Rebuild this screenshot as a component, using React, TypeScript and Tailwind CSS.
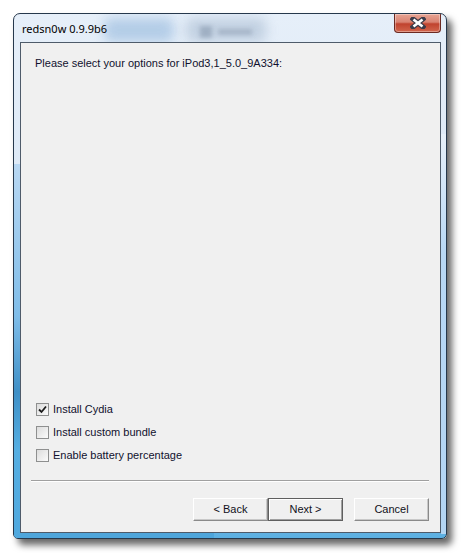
import React from "react";

function CheckBox({ checked }: { checked?: boolean }) {
  return (
    <div className="w-[13px] h-[13px] border border-[#8e8f8f] bg-gradient-to-br from-[#dcdcdc] to-[#fbfbfb] flex items-center justify-center shrink-0">
      {checked && (
        <svg width="9" height="9" viewBox="0 0 9 9">
          <path d="M1 4.5 L3.5 7 L8 1.5" fill="none" stroke="#1c1c1c" strokeWidth="1.8" />
        </svg>
      )}
    </div>
  );
}

function Btn({ label, def, className = "" }: { label: string; def?: boolean; className?: string }) {
  return (
    <div
      className={
        "w-[75px] h-[23px] flex items-center justify-center text-[11px] text-[#101020] bg-[#f0f0f0] " +
        (def
          ? "border border-[#5f5f5f] shadow-[inset_1px_1px_0_#ffffff,inset_-1px_-1px_0_#a0a0a0] "
          : "border-t border-l border-t-[#ffffff] border-l-[#ffffff] border-r border-b border-r-[#8a8a8a] border-b-[#8a8a8a] shadow-[inset_-1px_-1px_0_#c8c8c8] ") +
        className
      }
    >
      {label}
    </div>
  );
}

export default function App() {
  return (
    <div className="w-[461px] h-[553px] bg-white pt-[13px] pl-[13px]" style={{ fontFamily: '"Liberation Sans", Arial, sans-serif' }}>
      <div className="relative w-[434px] h-[526px] rounded-t-[7px] rounded-b-[5px] border border-[#26384c] shadow-[5px_6px_7px_rgba(0,0,0,0.6)] pt-[28px] pl-[6px] pr-[5px] pb-[5px] overflow-hidden bg-[linear-gradient(to_bottom,#e6eff9_0%,#dde9f6_30%,#cfe3f6_60%,#a9d0f0_75%,#5cb0e2_100%)]">
        {/* blurred glass decoration */}
        <div className="absolute left-[90px] top-[4px] w-[70px] h-[24px] rounded-[6px] bg-[#9fbfe0] blur-[6px] opacity-70" />
        <div className="absolute left-[172px] top-[4px] w-[80px] h-[24px] rounded-[6px] bg-[#b3c4d8] blur-[6px] opacity-70" />
        <div className="absolute left-[186px] top-[12px] w-[12px] h-[12px] bg-[#7d8fa5] blur-[2px] opacity-50" />
        <div className="absolute left-[204px] top-[15px] w-[34px] h-[6px] bg-[#8b9bb0] blur-[2px] opacity-50" />
        <div className="absolute left-0 bottom-0 w-[200px] h-[6px] bg-[#4ea6dc]" />
        <div className="absolute left-0 top-[150px] w-[6px] h-[380px] bg-[linear-gradient(to_bottom,#b8d7f2,#7fbde9_40%,#3e8fc6_60%,#55aee2_75%,#4fa8de)]" />
        <div className="absolute right-0 top-[120px] w-[5px] h-[400px] bg-[linear-gradient(to_bottom,#e7f0f9,#b8d8f5_30%,#b3d5f3)]" />

        {/* title */}
        <div className="absolute left-[8px] top-[7px] text-[11px] text-black" style={{ fontFamily: '"Noto Sans", "Open Sans", sans-serif' }}>
          redsn0w 0.9.9b6
        </div>

        {/* close button */}
        <div className="absolute right-[5px] top-0 w-[47px] h-[19px] rounded-b-[4px] border border-t-0 border-[#6b2a22] bg-[linear-gradient(to_bottom,#e8a493_0%,#d98372_45%,#c0432e_55%,#d2664d_100%)] flex items-center justify-center shadow-[inset_0_0_0_1px_rgba(255,255,255,0.35)]">
          <svg width="16" height="12" viewBox="0 0 16 12">
            <path d="M3 2 L13 10 M13 2 L3 10" stroke="#3c3c4a" strokeWidth="5" strokeLinecap="square" />
            <path d="M3.5 2.5 L12.5 9.5 M12.5 2.5 L3.5 9.5" stroke="#ffffff" strokeWidth="2.6" strokeLinecap="butt" />
          </svg>
        </div>

        {/* client */}
        <div className="relative h-full border border-[#4e5b6a] bg-[#f0f0f0] flex flex-col text-[11px] text-[#10102e]">
          <div className="pl-[14px] pt-[13px] leading-[14px]">Please select your options for iPod3,1_5.0_9A334:</div>
          <div className="flex-1" />
          <div className="flex flex-col pl-[15px]">
            <div className="h-[23px] flex items-center gap-[4px]">
              <CheckBox checked />
              <span>Install Cydia</span>
            </div>
            <div className="h-[23px] flex items-center gap-[4px]">
              <CheckBox />
              <span>Install custom bundle</span>
            </div>
            <div className="h-[23px] flex items-center gap-[4px]">
              <CheckBox />
              <span>Enable battery percentage</span>
            </div>
          </div>
          <div className="mt-[13px] ml-[10px] mr-[11px] h-[2px] border-t border-t-[#a0a0a0] border-b border-b-[#ffffff]" />
          <div className="flex justify-end mt-[16px] mr-[11px] mb-[11px]">
            <Btn label="< Back" />
            <Btn label="Next >" def />
            <Btn label="Cancel" className="ml-[11px]" />
          </div>
        </div>
      </div>
    </div>
  );
}
